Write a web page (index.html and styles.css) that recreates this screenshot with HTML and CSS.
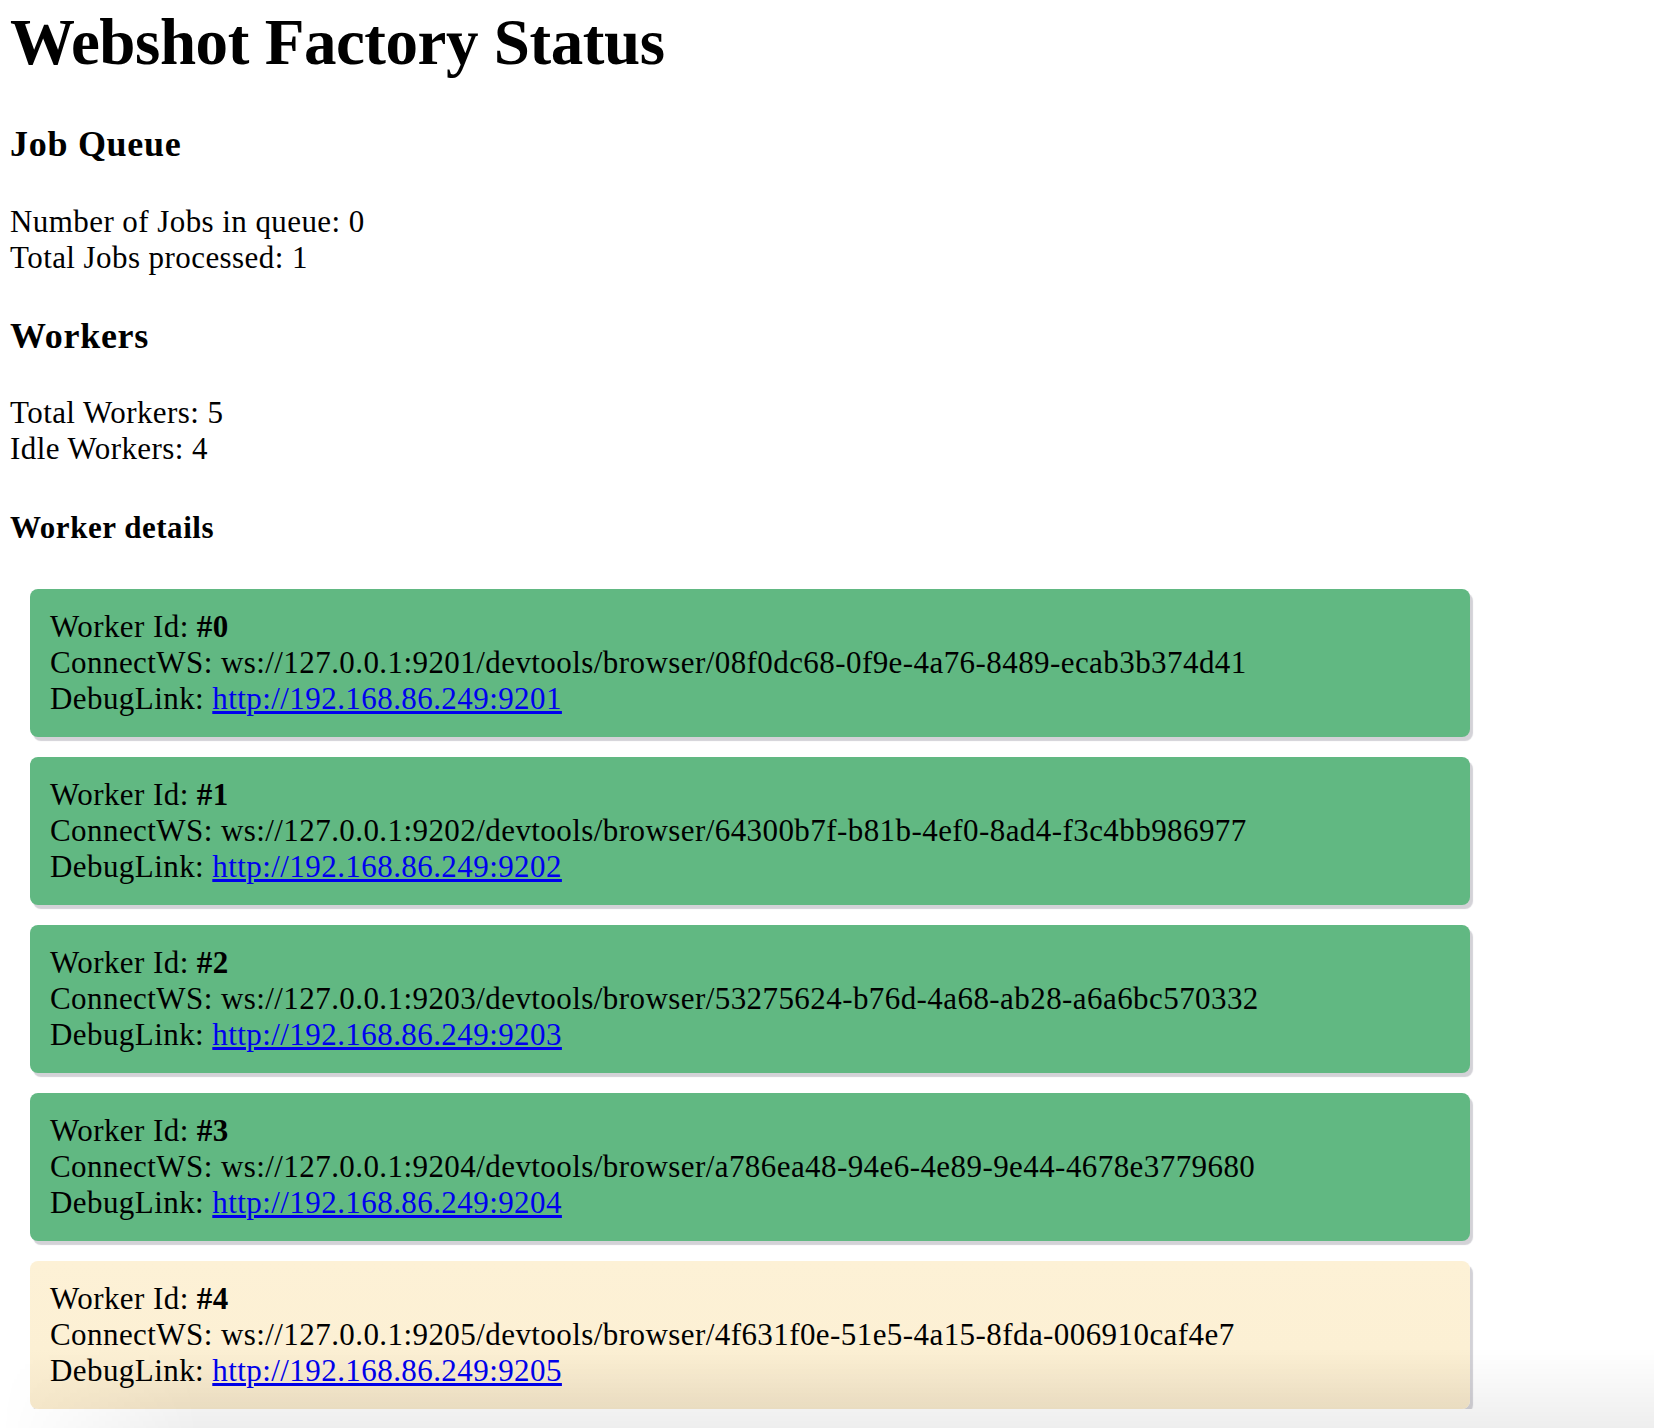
FILE: index.html
```html
<!DOCTYPE html>
<html>
<head>
<meta charset="utf-8">
<title>Webshot Factory Status</title>
<link rel="stylesheet" href="styles.css">
</head>
<body>
<h1 class="title">Webshot Factory Status</h1>

<h3 class="section">Job Queue</h3>
<div class="stats">
  <div>Number of Jobs in queue: 0</div>
  <div>Total Jobs processed: 1</div>
</div>

<h3 class="section section-workers">Workers</h3>
<div class="stats stats-workers">
  <div>Total Workers: 5</div>
  <div>Idle Workers: 4</div>
</div>

<h4 class="subsection">Worker details</h4>

<div class="workers">
  <div class="worker idle">
    <div>Worker Id: <b>#0</b></div>
    <div>ConnectWS: ws://127.0.0.1:9201/devtools/browser/08f0dc68-0f9e-4a76-8489-ecab3b374d41</div>
    <div>DebugLink: <a href="#">http://192.168.86.249:9201</a></div>
  </div>
  <div class="worker idle">
    <div>Worker Id: <b>#1</b></div>
    <div>ConnectWS: ws://127.0.0.1:9202/devtools/browser/64300b7f-b81b-4ef0-8ad4-f3c4bb986977</div>
    <div>DebugLink: <a href="#">http://192.168.86.249:9202</a></div>
  </div>
  <div class="worker idle">
    <div>Worker Id: <b>#2</b></div>
    <div>ConnectWS: ws://127.0.0.1:9203/devtools/browser/53275624-b76d-4a68-ab28-a6a6bc570332</div>
    <div>DebugLink: <a href="#">http://192.168.86.249:9203</a></div>
  </div>
  <div class="worker idle">
    <div>Worker Id: <b>#3</b></div>
    <div>ConnectWS: ws://127.0.0.1:9204/devtools/browser/a786ea48-94e6-4e89-9e44-4678e3779680</div>
    <div>DebugLink: <a href="#">http://192.168.86.249:9204</a></div>
  </div>
  <div class="worker busy">
    <div>Worker Id: <b>#4</b></div>
    <div>ConnectWS: ws://127.0.0.1:9205/devtools/browser/4f631f0e-51e5-4a15-8fda-006910caf4e7</div>
    <div>DebugLink: <a href="#">http://192.168.86.249:9205</a></div>
  </div>
</div>

<div class="bottom-fade"></div>
</body>
</html>
```

FILE: styles.css
```css
html, body {
  margin: 0;
  background: #ffffff;
}

body {
  padding: 5px 0 0 10px;
  font-family: "Liberation Serif", "Times New Roman", serif;
  font-size: 31px;
  line-height: 36px;
  letter-spacing: 0.43px;
  color: #000;
}

.title {
  margin: 0;
  font-size: 65px;
  line-height: 75px;
  font-weight: bold;
  letter-spacing: -0.45px;
}

.section {
  margin: 43px 0 0 0;
  font-size: 36px;
  line-height: 42px;
  font-weight: bold;
  letter-spacing: 0.72px;
}

.section-workers {
  margin-top: 39px;
}

.stats {
  margin-top: 39px;
}

.stats-workers {
  margin-top: 38px;
}

.subsection {
  margin: 43px 0 0 0;
  font-size: 31px;
  line-height: 36px;
  font-weight: bold;
  letter-spacing: 0.53px;
}

.workers {
  margin: 43px 0 0 20px;
  width: 1440px;
  display: flex;
  flex-direction: column;
  gap: 20px;
}

.worker {
  padding: 20px 20px 20px 20px;
  border-radius: 8px;
  box-shadow: 3px 4px 1px #d3d2d7;
}

.worker.idle {
  background: #61b882;
}

.worker.busy {
  background: linear-gradient(to bottom, #fdf1d6 0%, #fcf0d4 60%, #f6e8cb 100%);
}

.worker a {
  color: #0000ee;
  text-decoration: underline;
}

.bottom-fade {
  position: fixed;
  left: 0;
  right: 0;
  bottom: 0;
  height: 80px;
  pointer-events: none;
  background: linear-gradient(to bottom, rgba(0, 0, 0, 0) 0%, rgba(0, 0, 0, 0.065) 100%);
  -webkit-mask-image: linear-gradient(to right, rgba(0,0,0,0) 0%, rgba(0,0,0,1) 12%);
  mask-image: linear-gradient(to right, rgba(0,0,0,0) 0%, rgba(0,0,0,1) 12%);
}
```
